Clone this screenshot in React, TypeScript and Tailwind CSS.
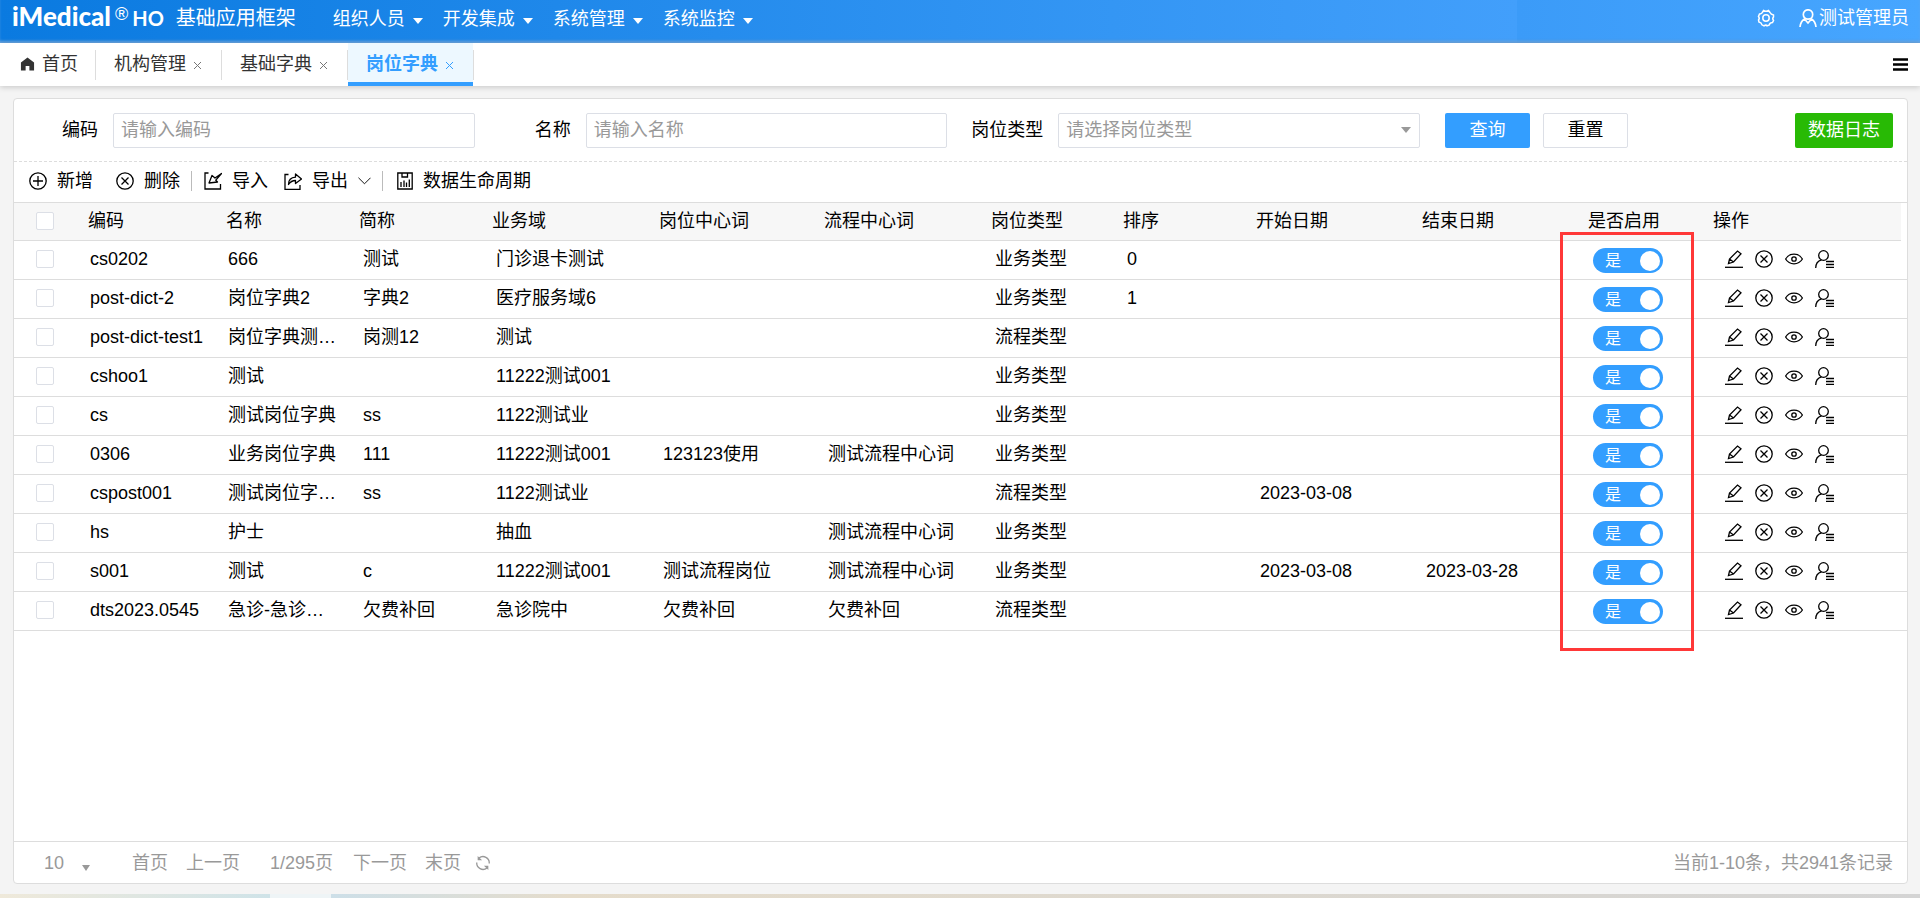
import { ReactNode, SVGProps } from "react"
import clsx from "clsx"

const menus = ["组织人员", "开发集成", "系统管理", "系统监控"]

const columns = [
    { title: "编码", width: "w-[138px]" },
    { title: "名称", width: "w-[133px]" },
    { title: "简称", width: "w-[133px]" },
    { title: "业务域", width: "w-[167px]" },
    { title: "岗位中心词", width: "w-[165px]" },
    { title: "流程中心词", width: "w-[167px]" },
    { title: "岗位类型", width: "w-[132px]" },
    { title: "排序", width: "w-[133px]" },
    { title: "开始日期", width: "w-[166px]" },
    { title: "结束日期", width: "w-[166px]" },
    { title: "是否启用", width: "w-[125px]" },
]

const rows = [
    ["cs0202", "666", "测试", "门诊退卡测试", "", "", "业务类型", "0", "", ""],
    ["post-dict-2", "岗位字典2", "字典2", "医疗服务域6", "", "", "业务类型", "1", "", ""],
    ["post-dict-test1", "岗位字典测…", "岗测12", "测试", "", "", "流程类型", "", "", ""],
    ["cshoo1", "测试", "", "11222测试001", "", "", "业务类型", "", "", ""],
    ["cs", "测试岗位字典", "ss", "1122测试业", "", "", "业务类型", "", "", ""],
    ["0306", "业务岗位字典", "111", "11222测试001", "123123使用", "测试流程中心词", "业务类型", "", "", ""],
    ["cspost001", "测试岗位字…", "ss", "1122测试业", "", "", "流程类型", "", "2023-03-08", ""],
    ["hs", "护士", "", "抽血", "", "测试流程中心词", "业务类型", "", "", ""],
    ["s001", "测试", "c", "11222测试001", "测试流程岗位", "测试流程中心词", "业务类型", "", "2023-03-08", "2023-03-28"],
    ["dts2023.0545", "急诊-急诊…", "欠费补回", "急诊院中", "欠费补回", "欠费补回", "流程类型", "", "", ""],
]

function Icon({ children, ...props }: SVGProps<SVGSVGElement>) {
    return (
        <svg width="18" height="18" viewBox="0 0 18 18" fill="none" stroke="currentColor" strokeWidth="1.3" aria-hidden="true" {...props}>
            {children}
        </svg>
    )
}

const Caret = ({ className }: { className?: string }) => (
    <svg width="10" height="6" viewBox="0 0 10 6" className={className} aria-hidden="true">
        <path d="M0 0h10L5 6z" fill="currentColor" />
    </svg>
)

const PlusIcon = () => (
    <Icon>
        <circle cx="9" cy="9" r="8.2" />
        <path d="M9 4v10M4 9h10" />
    </Icon>
)

const CloseCircleIcon = () => (
    <Icon>
        <circle cx="9" cy="9" r="8.2" />
        <path d="M5.5 5.5l7 7M12.5 5.5l-7 7" />
    </Icon>
)

const ImportIcon = () => (
    <Icon>
        <path d="M4.500 1H1v16h15.500V12" />
        <path d="M17.500 1.500L11 6L8 3.500L5 11L13.500 10L11.800 8.200Q14 5.500 17.500 1.500Z" strokeLinejoin="round" />
    </Icon>
)

const ExportIcon = () => (
    <Icon>
        <path d="M4.500 2.500H1V17.300h15V13" />
        <path d="M4.500 12.500C4.500 8 7 5.500 11.500 5.200V2L17.500 7L11.500 11.500V8.500C8.500 8.500 6.500 9.500 4.500 12.500Z" strokeLinejoin="round" />
    </Icon>
)

const ChartIcon = () => (
    <Icon width="16" viewBox="0 0 16 18">
        <path d="M.8 1h14.400v16H.8zM5 1v4h5.500V1M4 15V10M7 15V8.500M9.500 15V10.500M12.300 15V7.500" />
    </Icon>
)

const EditIcon = () => (
    <Icon>
        <path d="M0 17.300h18" />
        <path d="M3.500 13.500L4.500 9L12.500 1L16 3.800L8.500 12L3.500 13.500ZM4.500 9L8.500 12" />
    </Icon>
)

const EyeIcon = () => (
    <Icon>
        <path d="M.6 9C4.500 2.600 13.500 2.600 17.400 9C13.500 15.400 4.500 15.400 .6 9Z" />
        <circle cx="9" cy="9" r="2.200" />
    </Icon>
)

const UserListIcon = () => (
    <Icon width="19" viewBox="0 0 19 18">
        <circle cx="8.500" cy="5.500" r="4.800" />
        <path d="M.7 18C.7 13.500 3 10.800 6.500 9.800" />
        <path d="M11 11.500h8M11 14.500h8M11 17.500h8" />
    </Icon>
)

function Tab({ title, active }: { title: string; active?: boolean }) {
    return (
        <div
            className={clsx(
                "flex h-[43px] items-center gap-2 border-b-4 pl-[18px] pr-5 pt-[2px]",
                active ? "border-[#339eff] bg-[#edf8ff] text-[#339eff]" : "border-transparent text-[#333]"
            )}
        >
            <a href="#" className={clsx(active && "font-bold")}>{title}</a>
            <button aria-label={"关闭" + title} className={active ? "text-[#339eff]" : "text-[#777]"}>
                <svg width="7" height="7" viewBox="0 0 7 7" stroke="currentColor" className="mt-1">
                    <path d="M0 0l7 7M7 0L0 7" />
                </svg>
            </button>
        </div>
    )
}

const Divider = () => <div className="h-[30px] w-px bg-[#ddd]" />

function Field({ id, label, children }: { id: string; label: string; children: ReactNode }) {
    return (
        <div className="flex flex-1 items-center gap-[15px]">
            <label htmlFor={id} className="w-[84px] shrink-0 text-right">{label}</label>
            {children}
        </div>
    )
}

function Checkbox({ label }: { label: string }) {
    return (
        <input
            type="checkbox"
            aria-label={label}
            className="block size-[18px] appearance-none rounded-xs border border-[#dcdfe6] bg-white"
        />
    )
}

function Switch({ label }: { label: string }) {
    return (
        <button
            role="switch"
            aria-checked="true"
            aria-label={label}
            className="mt-1 flex h-[25px] w-[70px] items-center justify-between rounded-full bg-[#339eff] pl-3 pr-[3px] text-base text-white"
        >
            是
            <span className="size-5 rounded-full bg-white" />
        </button>
    )
}

function App() {
    return (
        <div className="flex h-screen flex-col bg-[#f4f4f4] font-['Liberation_Sans','Noto_Sans_CJK_SC',sans-serif] text-lg leading-6 text-black">
            <header className="flex h-[43px] shrink-0 items-center bg-[linear-gradient(90deg,#0a7ae0,#3496f4_58%,#429ffb_79%,#3b9bf8_79%,#47a6ff)] pb-2 text-white shadow-[inset_0_-3px_3px_-1px_#6fa9e3]">
                <div className="flex items-center pl-3">
                    <span className="pb-1 font-[Lato] text-[26px] font-black">iMedical</span>
                    <span className="ml-1 pb-2 text-lg">®</span>
                    <span className="ml-1 font-[Lato] text-xl font-bold">HO</span>
                    <h1 className="ml-3 text-xl">基础应用框架</h1>
                </div>
                <nav className="ml-[37px] flex gap-5 pt-[2px]">
                    {menus.map((menu) => (
                        <button key={menu} className="flex items-center gap-2">
                            {menu}
                            <Caret className="mt-1" />
                        </button>
                    ))}
                </nav>
                <div className="ml-auto flex items-center pr-[11px]">
                    <button aria-label="设置">
                        <Icon strokeWidth="1.5">
                            <path d="M6.500 1.500Q9 3 11.500 1.500L13 3.500Q14 5.500 16.500 6L16.500 8Q15 9.500 16.500 11.500L15.500 13.500Q13 13.500 12 16.200L10 16.800Q9 15.500 7 16.800L5 15.800Q4.500 13.500 2 13L1.500 11Q3 9.500 1.500 7.500L2.500 5Q5 5 6.500 1.500Z" />
                            <circle cx="9" cy="9" r="3.200" />
                        </Icon>
                    </button>
                    <button className="ml-6 flex items-center">
                        <Icon strokeWidth="1.7">
                            <circle cx="9" cy="5.500" r="4.700" />
                            <path d="M1 18Q1.500 12.500 5.500 10L9 14L12.500 10Q16.500 12.500 17 18" />
                        </Icon>
                        <span className="ml-[2px]">测试管理员</span>
                    </button>
                </div>
            </header>

            <div className="z-10 flex h-[43px] shrink-0 items-center bg-white shadow-[0_1px_6px_#0003]">
                <a href="#" className="flex items-center gap-[7px] pb-[2px] pl-5 pr-[17px] text-[#333]">
                    <svg width="15" height="14" viewBox="0 0 16 14" fill="currentColor" aria-hidden="true">
                        <path d="M8 0L1 5.500V14H6V9h4v5h5V5.500z" />
                    </svg>
                    首页
                </a>
                <Divider />
                <Tab title="机构管理" />
                <Divider />
                <Tab title="基础字典" />
                <Divider />
                <Tab title="岗位字典" active />
                <Divider />
                <button aria-label="标签页菜单" className="ml-auto mr-3">
                    <svg width="15" height="13" viewBox="0 0 15 13" stroke="currentColor" strokeWidth="2.500">
                        <path d="M0 1.500h15M0 6.500h15M0 11.500h15" />
                    </svg>
                </button>
            </div>

            <main className="mb-[10px] ml-[13px] mr-3 mt-3 flex min-h-0 flex-1 flex-col rounded border border-[#ddd] bg-white">
                <form className="flex h-[63px] shrink-0 items-center border-b border-dashed border-[#ddd] pr-[14px]">
                    <div className="flex w-[1406px] shrink gap-3">
                        <Field id="code" label="编码">
                            <input id="code" placeholder="请输入编码" className="h-[35px] w-full min-w-0 rounded-xs border border-[#dcdfe6] px-[7px] placeholder:text-[#999]" />
                        </Field>
                        <Field id="name" label="名称">
                            <input id="name" placeholder="请输入名称" className="h-[35px] w-full min-w-0 rounded-xs border border-[#dcdfe6] px-[7px] placeholder:text-[#999]" />
                        </Field>
                        <Field id="type" label="岗位类型">
                            <div className="relative w-full min-w-0">
                                <select id="type" className="block h-[35px] w-full appearance-none rounded-xs border border-[#dcdfe6] px-[7px] text-[#999]">
                                    <option>请选择岗位类型</option>
                                </select>
                                <Caret className="absolute right-[9px] top-[14px] text-[#999]" />
                            </div>
                        </Field>
                    </div>
                    <button type="button" className="ml-[25px] h-[35px] w-[85px] shrink-0 rounded-xs bg-[#339eff] text-white">查询</button>
                    <button type="reset" className="ml-[13px] h-[35px] w-[85px] shrink-0 rounded-xs border border-[#dcdfe6]">重置</button>
                    <button type="button" className="ml-auto h-[35px] w-[98px] shrink-0 rounded-xs bg-[#28ba05] text-white">数据日志</button>
                </form>

                <div className="flex h-[41px] shrink-0 items-center border-b border-[#ddd] pb-[2px] pl-[15px]">
                    <button className="flex items-center gap-[10px]"><PlusIcon />新增</button>
                    <button className="ml-[23px] flex items-center gap-[10px]"><CloseCircleIcon />删除</button>
                    <span className="ml-[11px] mr-3 h-5 w-px bg-[#bbb]" />
                    <button className="flex items-center gap-[10px]"><ImportIcon />导入</button>
                    <button className="ml-4 flex items-center gap-[10px]">
                        <ExportIcon />
                        导出
                        <svg width="13" height="8" viewBox="0 0 14 8" fill="none" stroke="currentColor">
                            <path d="M.5 .5L7 7L13.500 .5" />
                        </svg>
                    </button>
                    <span className="ml-[11px] mr-[14px] h-5 w-px bg-[#bbb]" />
                    <button className="flex items-center gap-[10px]"><ChartIcon />数据生命周期</button>
                </div>

                <div className="min-h-0 flex-1 overflow-auto">
                    <div className="relative min-w-[1850px]">
                        <table className="w-full table-fixed border-collapse text-left">
                            <thead>
                                <tr className="h-[37px]">
                                    <th className="w-[66px] border-b border-[#ddd] bg-[#f7f7f7] pl-[22px]">
                                        <Checkbox label="全选" />
                                    </th>
                                    {columns.map((col) => (
                                        <th key={col.title} className={clsx("border-b border-[#ddd] bg-[#f7f7f7] pl-2 font-normal", col.width)}>
                                            {col.title}
                                        </th>
                                    ))}
                                    <th className="border-b border-[#ddd] bg-[#f7f7f7] pl-2 font-normal">操作</th>
                                    <td className="w-[6px]" />
                                </tr>
                            </thead>
                            <tbody>
                                {rows.map((row) => (
                                    <tr key={row[0]} className="h-[39px] border-b border-[#ddd]">
                                        <td className="pb-[2px] pl-[22px]"><Checkbox label={row[0]} /></td>
                                        {row.map((value, i) => (
                                            <td key={i} className={clsx("truncate pb-[2px]", i < 2 ? "pl-[10px]" : "pl-3")}>{value}</td>
                                        ))}
                                        <td className="pb-[2px] pl-[13px]"><Switch label={"启用 " + row[0]} /></td>
                                        <td colSpan={2} className="pb-[2px] pl-5">
                                            <div className="flex gap-3">
                                                <button aria-label="编辑"><EditIcon /></button>
                                                <button aria-label="删除"><CloseCircleIcon /></button>
                                                <button aria-label="查看"><EyeIcon /></button>
                                                <button aria-label="人员"><UserListIcon /></button>
                                            </div>
                                        </td>
                                    </tr>
                                ))}
                            </tbody>
                        </table>
                        {/* highlight around the enable column */}
                        <div className="pointer-events-none absolute -bottom-5 left-[1546px] top-[29px] w-[134px] border-3 border-[#ff3838]" />
                    </div>
                </div>

                <footer className="flex h-[42px] shrink-0 items-center border-t border-[#ddd] pl-[30px] pr-[14px] text-[#999]">
                    <div className="relative">
                        <select aria-label="每页条数" className="w-[46px] appearance-none">
                            <option>10</option>
                        </select>
                        <svg width="8" height="6" viewBox="0 0 8 6" className="absolute right-0 top-[14px]" aria-hidden="true">
                            <path d="M0 0h8L4 6z" fill="currentColor" />
                        </svg>
                    </div>
                    <button className="ml-[42px]">首页</button>
                    <button className="ml-[18px]">上一页</button>
                    <span className="ml-[30px]">1/295页</span>
                    <button className="ml-5">下一页</button>
                    <button className="ml-[18px]">末页</button>
                    <button aria-label="刷新" className="ml-[14px]">
                        <Icon width="16" height="16" strokeWidth="1.5">
                            <path d="M4.500 3.500A7 7 0 0 1 16 9.500M13.500 14.500A7 7 0 0 1 2 8.500" />
                            <path d="M3 1v5h5zM15 17v-5h-5z" fill="currentColor" stroke="none" />
                        </Icon>
                    </button>
                    <span className="ml-auto">当前1-10条，共2941条记录</span>
                </footer>
            </main>

            <div className="flex h-1 shrink-0">
                <div className="w-[270px] bg-linear-to-r from-[#efe9da] to-[#cfe3e8]" />
                <div className="w-[61px] bg-[#eef4f6]" />
                <div className="flex-1 bg-linear-to-r from-[#cddfe8] via-[#e5dccb] via-15% to-[#d4d4d4]" />
            </div>
        </div>
    )
}

export default App
